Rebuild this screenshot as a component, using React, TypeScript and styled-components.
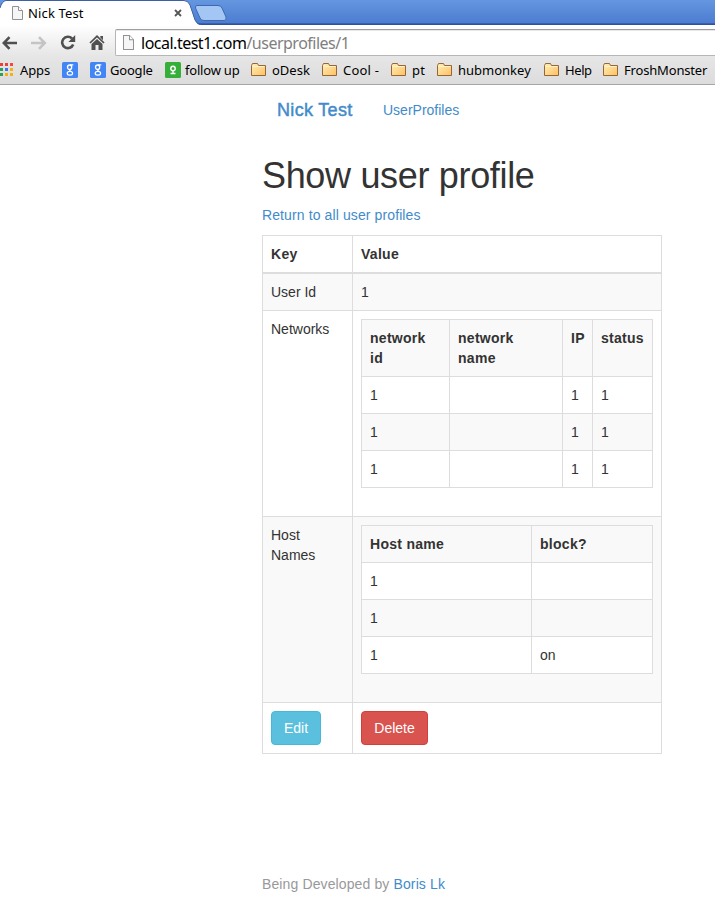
import React from "react";
import styled, { createGlobalStyle } from "styled-components";

const GlobalStyle = createGlobalStyle`
  * { box-sizing: border-box; }
  body {
    margin: 0;
    background: #fff;
    color: #333;
    font: 14px/20px "Liberation Sans", Arial, sans-serif;
    overflow: hidden;
  }
`;

const Window = styled.div`
  width: 715px;
  height: 906px;
  overflow: hidden;
  svg { display: block; flex: none; }
`;

/* Browser frame */
const ChromeText = styled.span<{ $size?: number; $track?: number }>`
  font-family: "Noto Sans", "Open Sans", sans-serif;
  font-size: ${(p) => p.$size ?? 13}px;
  letter-spacing: ${(p) => p.$track ?? 0}px;
  line-height: 18px;
  color: #000;
  white-space: pre;
`;
const TabStrip = styled.div`
  position: relative;
  display: flex;
  height: 25px;
  background: linear-gradient(#6596e0, #4c7dd0 23px, #4170bf 23px, #2f509a 24px);
`;
const TabShapes = styled.svg`
  position: absolute;
  inset: 0 auto auto 0;
`;
const Tab = styled.div`
  position: relative;
  display: flex;
  align-items: center;
  width: 195px;
  height: 25px;
  padding-left: 12px;
`;
const TabTitle = styled(ChromeText)`
  width: 146px;
  margin-left: 5px;
`;
const Toolbar = styled.div`
  display: flex;
  height: 31px;
  background: linear-gradient(#fff, #e6e6e6);
`;
const NavButtons = styled.div`
  display: flex;
  align-items: center;
  width: 115px;
  padding: 4px 0 0 2px;
  gap: 13px;
`;
const AddressBar = styled.div`
  display: flex;
  flex: 1;
  align-items: center;
  height: 27px;
  margin-top: 4px;
  padding-left: 7px;
  border: 1px solid #b6b6b6;
  border-top-color: #9f9f9f;
  border-right: 0;
  border-radius: 2px 0 0 2px;
  background: #fff;
  box-shadow: inset 0 1px 0 #e7e7e7;
`;
const Url = styled(ChromeText)`
  margin-left: 7px;
`;
const UrlPath = styled.span`
  color: #808080;
`;
const Bookmarks = styled.div`
  display: flex;
  align-items: center;
  height: 29px;
  border-bottom: 1px solid #a6a6a6;
  background: linear-gradient(#e6e6e6, #dcdcdc);
`;
const Bookmark = styled.div<{ $width: number; $gap?: number }>`
  display: flex;
  flex: none;
  align-items: center;
  gap: ${(p) => p.$gap ?? 4}px;
  width: ${(p) => p.$width}px;
`;

/* Page */
const Page = styled.main`
  width: 399px;
  margin-left: 262px;
`;
const Nav = styled.nav`
  display: flex;
  align-items: center;
  height: 50px;
  padding-left: 15px;
`;
const Brand = styled.a`
  width: 106px;
  font-size: 18px;
  letter-spacing: 0.32px;
  color: #428bca;
  -webkit-text-stroke: 0.45px #428bca;
`;
const Link = styled.a<{ $track?: number }>`
  color: #428bca;
  letter-spacing: ${(p) => p.$track ?? 0}px;
`;
const Title = styled.h1`
  margin: 21px 0 9px;
  font-size: 36px;
  font-weight: 400;
  line-height: 40px;
  letter-spacing: -0.33px;
  white-space: nowrap;
`;
const Return = styled.p`
  margin: 0 0 10px;
`;
const Table = styled.table<{ $inner?: boolean }>`
  width: 100%;
  margin-bottom: ${(p) => (p.$inner ? 20 : 0)}px;
  border-collapse: collapse;
  table-layout: fixed;
  background: ${(p) => (p.$inner ? "#fff" : "transparent")};
`;
const Col = styled.col<{ $width: number }>`
  width: ${(p) => p.$width}px;
`;
const Row = styled.tr<{ $striped?: boolean }>`
  background: ${(p) => (p.$striped ? "#f9f9f9" : "#fff")};
`;
const Cell = styled.td`
  height: 37px;
  padding: 8px;
  border: 1px solid #ddd;
  vertical-align: top;
`;
const HeadCell = styled.th<{ $thick?: boolean }>`
  padding: 8px;
  border: 1px solid #ddd;
  border-bottom-width: ${(p) => (p.$thick ? 2 : 1)}px;
  text-align: left;
  vertical-align: top;
  font-weight: 700;
  letter-spacing: 0.28px;
`;
const Button = styled.button<{ $tone: "info" | "danger"; $width: number }>`
  display: block;
  width: ${(p) => p.$width}px;
  height: 34px;
  padding: 0;
  border: 1px solid ${(p) => (p.$tone === "info" ? "#46b8da" : "#d43f3a")};
  border-radius: 4px;
  background: ${(p) => (p.$tone === "info" ? "#5bc0de" : "#d9534f")};
  color: #fff;
  font: inherit;
`;
const Footer = styled.footer`
  margin-top: 120px;
  color: #999;
  letter-spacing: 0.12px;
`;

const PageIcon = ({ h = 14 }: { h?: number }) => (
  <svg width="11" height={h} viewBox="0 0 11 14" preserveAspectRatio="none">
    <path d="M.5.5h6l4 4v9H.5z" fill="#f6f6f6" stroke="#929292" />
    <path d="M6.5.5v4h4" fill="#fff" stroke="#929292" />
  </svg>
);
const BackIcon = () => (
  <svg width="16" height="14" viewBox="0 0 16 14" fill="none" stroke="#505050" strokeWidth="2.6">
    <path d="M7.500 1.200 1.800 7 7.500 12.800M2 7H15" />
  </svg>
);
const ForwardIcon = () => (
  <svg width="16" height="14" viewBox="0 0 16 14" fill="none" stroke="#c4c4c4" strokeWidth="2.6">
    <path d="m8 1.2 5.800 5.800L8 12.800M13.500 7H0" />
  </svg>
);
const ReloadIcon = () => (
  <svg width="16" height="15" viewBox="0 0 16 15">
    <path d="M12 3.5A5.7 5.7 0 1 0 13.2 9.5" fill="none" stroke="#505050" strokeWidth="2.6" />
    <path d="M15.2 0v7H8.4z" fill="#505050" />
  </svg>
);
const HomeIcon = () => (
  <svg width="16" height="15" viewBox="0 0 16 15" fill="#505050">
    <path d="m8 0 7.6 7.4-1.2 1L8 2.600 1.600 8.400l-1.200-1z" />
    <path d="M11.3 1H14v4.200l-2.700-2.600zM8 4l5.500 5v6h-4v-5h-3v5h-4V9z" />
  </svg>
);
const appColors = ["#ee4035", "#ee4035", "#f5483c", "#2f9e58", "#3b78e7", "#f6b20b", "#2f9e58", "#f6b20b", "#f6b20b"];
const AppsIcon = () => (
  <svg width="13" height="15" viewBox="0 0 13 15">
    {appColors.map((c, i) => (
      <rect key={i} x={(i % 3) * 5} y={Math.floor(i / 3) * 5} width="3" height="3" fill={c} />
    ))}
  </svg>
);
const GoogleIcon = () => (
  <svg width="16" height="16" viewBox="0 0 16 16" fill="none" stroke="#fff">
    <rect width="16" height="16" rx="1.5" fill="#4285f4" stroke="none" />
    <ellipse cx="7.6" cy="5.2" rx="2.1" ry="2.2" strokeWidth="1.3" />
    <path d="M8 2.9h3.300M9 7.200c-2.200.9-1.600 1.300.2 2.200" strokeWidth="1.1" />
    <ellipse cx="7.9" cy="11.200" rx="2.700" ry="1.900" strokeWidth="1.2" />
  </svg>
);
const FollowIcon = () => (
  <svg width="16" height="16" viewBox="0 0 16 16" fill="none" stroke="#fff">
    <rect width="16" height="16" rx="1.5" fill="#36ae3a" stroke="none" />
    <circle cx="8" cy="6.500" r="2.200" strokeWidth="1.4" />
    <path d="M8 8.700V12M5.500 11.500h5" strokeWidth="1.3" />
  </svg>
);
const FolderIcon = () => (
  <svg width="16" height="14" viewBox="0 0 16 14">
    <defs>
      <linearGradient id="folder" x2="1" y2="1">
        <stop stopColor="#fff0b8" />
        <stop offset="1" stopColor="#ffbf60" />
      </linearGradient>
    </defs>
    <path d="M.5 12.500v-10l1-2h5l1 2h7v10z" fill="url(#folder)" stroke="#94663c" />
    <path d="M1.500 3.500h12" stroke="#fff2c7" />
  </svg>
);
const CloseIcon = () => (
  <svg width="8" height="8" viewBox="0 0 8 8" stroke="#555" strokeWidth="1.8">
    <path d="m1 1 6 6M7 1 1 7" />
  </svg>
);

const bookmarks = [
  { label: "oDesk", width: 71, track: 0 },
  { label: "Cool -", width: 69, track: 0.2 },
  { label: "pt", width: 46, track: 0.3 },
  { label: "hubmonkey", width: 107, track: 0 },
  { label: "Help", width: 59, track: -0.4 },
  { label: "FroshMonster", width: 112, track: -0.18 },
];

const networks = [1, 2, 3];
const hosts = ["", "", "on"];

export default function App() {
  return (
    <Window>
      <GlobalStyle />
      <TabStrip>
        <TabShapes width="240" height="25" viewBox="0 0 240 25">
          <path d="M0 25V8Q2 1 6 .5H184Q188 .5 190 5L195 20Q197 25 201 25Z" fill="#fff" />
          <path d="M0 8Q2 1 6 .5H184Q188 .5 190 5L195 20Q197 24.5 201 24.5" fill="none" stroke="#3c61a5" />
          <path d="M197 5.500H218Q221 5.500 222 8L226 17Q227 20.500 224 20.500H204Q201 20.500 200 18L195.500 8Q195 5.500 197 5.500Z" fill="#a4c6f5" stroke="#3f69b1" />
        </TabShapes>
        <Tab>
          <PageIcon />
          <TabTitle $track={0.15}>Nick Test</TabTitle>
          <CloseIcon />
        </Tab>
      </TabStrip>
      <Toolbar>
        <NavButtons>
          <BackIcon />
          <ForwardIcon />
          <ReloadIcon />
          <HomeIcon />
        </NavButtons>
        <AddressBar>
          <PageIcon h={15} />
          <Url $size={16} $track={-0.5}>local.test1.com<UrlPath>/userprofiles/1</UrlPath></Url>
        </AddressBar>
      </Toolbar>
      <Bookmarks>
        <Bookmark $width={62} $gap={7}><AppsIcon /><ChromeText $track={-0.1}>Apps</ChromeText></Bookmark>
        <Bookmark $width={28}><GoogleIcon /></Bookmark>
        <Bookmark $width={75}><GoogleIcon /><ChromeText $track={-0.2}>Google</ChromeText></Bookmark>
        <Bookmark $width={86}><FollowIcon /><ChromeText $track={-0.2}>follow up</ChromeText></Bookmark>
        {bookmarks.map((b) => (
          <Bookmark key={b.label} $width={b.width} $gap={5}>
            <FolderIcon />
            <ChromeText $track={b.track}>{b.label}</ChromeText>
          </Bookmark>
        ))}
      </Bookmarks>
      <Page>
        <Nav>
          <Brand>Nick Test</Brand>
          <Link>UserProfiles</Link>
        </Nav>
        <Title>Show user profile</Title>
        <Return><Link $track={0.11}>Return to all user profiles</Link></Return>
        <Table>
          <colgroup><Col $width={90} /><Col $width={309} /></colgroup>
          <thead>
            <Row><HeadCell $thick>Key</HeadCell><HeadCell $thick>Value</HeadCell></Row>
          </thead>
          <tbody>
            <Row $striped><Cell>User Id</Cell><Cell>1</Cell></Row>
            <Row>
              <Cell>Networks</Cell>
              <Cell>
                <Table $inner>
                  <colgroup><Col $width={88} /><Col $width={113} /><Col $width={30} /><Col $width={60} /></colgroup>
                  <thead>
                    <Row $striped>
                      <HeadCell>network<br />id</HeadCell>
                      <HeadCell>network<br />name</HeadCell>
                      <HeadCell>IP</HeadCell>
                      <HeadCell>status</HeadCell>
                    </Row>
                  </thead>
                  <tbody>
                    {networks.map((n, i) => (
                      <Row key={n} $striped={i % 2 === 1}><Cell>1</Cell><Cell /><Cell>1</Cell><Cell>1</Cell></Row>
                    ))}
                  </tbody>
                </Table>
              </Cell>
            </Row>
            <Row $striped>
              <Cell>Host<br />Names</Cell>
              <Cell>
                <Table $inner>
                  <colgroup><Col $width={170} /><Col $width={121} /></colgroup>
                  <thead>
                    <Row $striped><HeadCell>Host name</HeadCell><HeadCell>block?</HeadCell></Row>
                  </thead>
                  <tbody>
                    {hosts.map((h, i) => (
                      <Row key={i} $striped={i % 2 === 1}><Cell>1</Cell><Cell>{h}</Cell></Row>
                    ))}
                  </tbody>
                </Table>
              </Cell>
            </Row>
            <Row>
              <Cell><Button $tone="info" $width={50}>Edit</Button></Cell>
              <Cell><Button $tone="danger" $width={67}>Delete</Button></Cell>
            </Row>
          </tbody>
        </Table>
        <Footer>Being Developed by <Link $track={0.12}>Boris Lk</Link></Footer>
      </Page>
    </Window>
  );
}
